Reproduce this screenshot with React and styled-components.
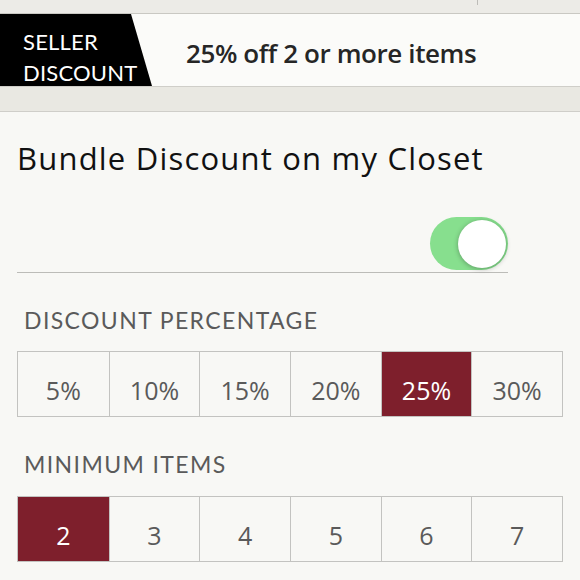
import React, { useState } from 'react';
import styled, { createGlobalStyle } from 'styled-components';

const Global = createGlobalStyle`
  body {
    margin: 0;
    background: #f8f8f5;
    font-family: "Open Sans", Lato, sans-serif;
  }
`;

const Page = styled.div`
  width: 580px;
  height: 580px;
  overflow: hidden;
  background: #f8f8f5;
`;

const TopStrip = styled.div`
  height: 13px;
  background: #ecebe7;
  border-bottom: 1px solid #c9c8c3;
  display: flex;
  justify-content: flex-end;
  padding-right: 102px;
`;

const Tick = styled.div`
  width: 1px;
  height: 5px;
  background: #bdbcb8;
`;

const Banner = styled.div`
  height: 72px;
  background: #fbfbf9;
  display: flex;
  align-items: center;
`;

const Label = styled.div`
  height: 100%;
  width: 152px;
  background: #000;
  clip-path: polygon(0 0, 131px 0, 152px 100%, 0 100%);
  color: #fff;
  font-family: Lato, sans-serif;
  font-size: 22px;
  line-height: 31px;
  padding: 12px 0 0 23px;
  box-sizing: border-box;
  letter-spacing: 0.2px;
`;

const Offer = styled.div`
  margin: 6px 0 0 34px;
  font-size: 26px;
  font-weight: 600;
  letter-spacing: -0.4px;
  color: #262626;
`;

const Band = styled.div`
  height: 24px;
  background: #e9e8e2;
  border-top: 1px solid #cfcec9;
  border-bottom: 1px solid #cfcec9;
`;

const Body = styled.div`
  padding: 0 17px;
`;

const Title = styled.h1`
  margin: 26px 0 0;
  font-size: 31px;
  font-weight: 400;
  letter-spacing: 1.2px;
  color: #111;
  line-height: 40px;
`;

const ToggleRow = styled.div`
  display: flex;
  justify-content: flex-end;
  padding: 39px 0 2px 0;
  border-bottom: 1px solid #bcbcb8;
  margin-right: 55px;
`;

const Track = styled.button`
  width: 78px;
  height: 53px;
  border-radius: 27px;
  border: none;
  padding: 2px;
  background: ${p => (p.on ? '#87df8e' : '#dddddd')};
  display: flex;
  justify-content: ${p => (p.on ? 'flex-end' : 'flex-start')};
  align-items: center;
  cursor: pointer;
`;

const Knob = styled.span`
  width: 48px;
  height: 48px;
  border-radius: 50%;
  background: #fff;
  box-shadow: 0 1px 5px rgba(0, 0, 0, 0.3);
`;

const Heading = styled.div`
  margin: 33px 0 0 7px;
  font-family: Lato, sans-serif;
  font-size: 23px;
  letter-spacing: 1.4px;
  color: #5a5a5a;
  line-height: 28px;
`;

const Options = styled.div`
  margin-top: ${p => p.gap}px;
  display: grid;
  grid-template-columns: repeat(6, 1fr);
  border: 1px solid #c3c3c0;
  width: 546px;
  box-sizing: border-box;
`;

const Option = styled.div`
  height: 64px;
  box-sizing: border-box;
  padding-top: 12px;
  display: flex;
  align-items: center;
  justify-content: center;
  font-size: 25px;
  color: ${p => (p.active ? '#fff' : '#5a5a5a')};
  background: ${p => (p.active ? '#7e1f2c' : 'transparent')};
  border-left: 1px solid #c3c3c0;
  &:first-child {
    border-left: none;
  }
  cursor: pointer;
`;

const percents = ['5%', '10%', '15%', '20%', '25%', '30%'];
const counts = ['2', '3', '4', '5', '6', '7'];

export default function App() {
  const [on, setOn] = useState(true);
  const [pct, setPct] = useState('25%');
  const [min, setMin] = useState('2');

  return (
    <Page>
      <Global />
      <TopStrip>
        <Tick />
      </TopStrip>
      <Banner>
        <Label>
          SELLER
          <br />
          DISCOUNT
        </Label>
        <Offer>25% off 2 or more items</Offer>
      </Banner>
      <Band />
      <Body>
        <Title>Bundle Discount on my Closet</Title>
        <ToggleRow>
          <Track on={on ? 1 : 0} onClick={() => setOn(!on)}>
            <Knob />
          </Track>
        </ToggleRow>
        <Heading>DISCOUNT PERCENTAGE</Heading>
        <Options gap={17}>
          {percents.map(p => (
            <Option key={p} active={pct === p} onClick={() => setPct(p)}>
              {p}
            </Option>
          ))}
        </Options>
        <Heading>MINIMUM ITEMS</Heading>
        <Options gap={18}>
          {counts.map(c => (
            <Option key={c} active={min === c} onClick={() => setMin(c)}>
              {c}
            </Option>
          ))}
        </Options>
      </Body>
    </Page>
  );
}
